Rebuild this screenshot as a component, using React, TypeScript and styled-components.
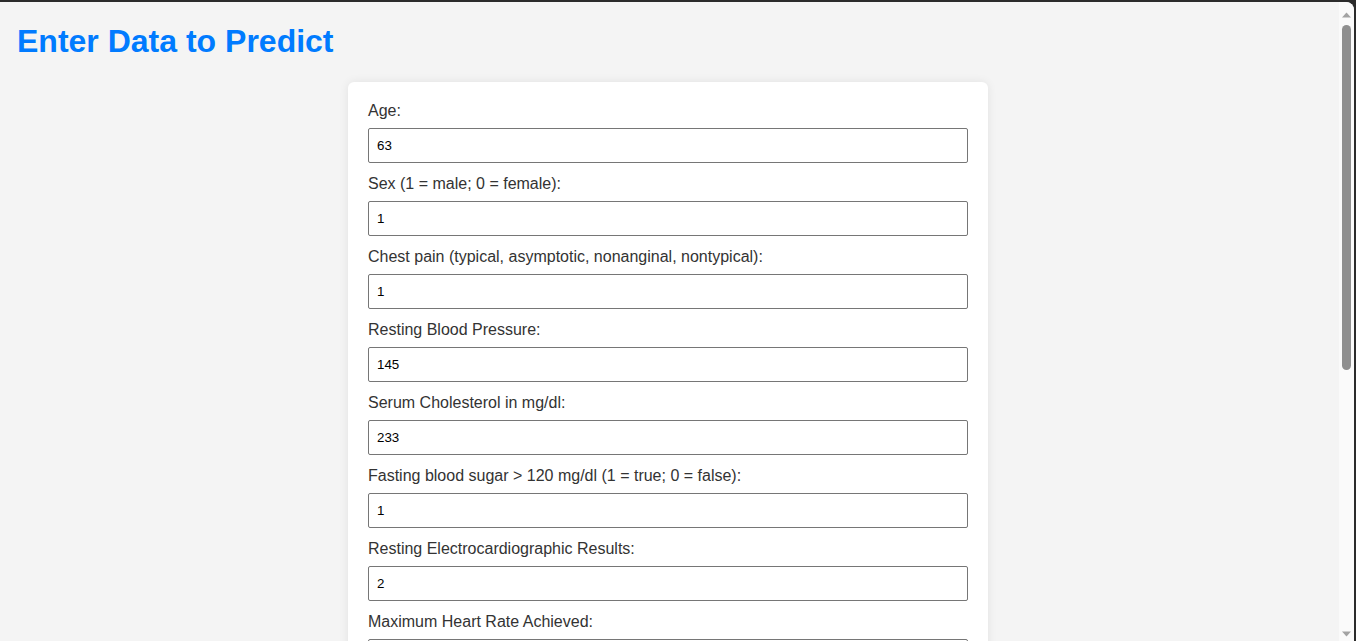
import React from "react";
import styled, { createGlobalStyle } from "styled-components";

const Global = createGlobalStyle`
  html, body { margin: 0; padding: 0; background: #2b2b2b; overflow: hidden; }
  #root { width: 1356px; height: 641px; }
`;

const Frame = styled.div`
  width: 1356px;
  height: 641px;
  box-sizing: border-box;
  padding: 2px 2px 0 0;
  background: #2b2b2b;
`;

const Viewport = styled.div`
  display: flex;
  height: 639px;
  background: #f4f4f4;
  border-top-right-radius: 8px;
  overflow: hidden;
`;

const Page = styled.div`
  flex: 1;
  min-width: 0;
  overflow: hidden;
  padding: 0 18px 0 15px;
  font-family: "Liberation Sans", Arial, sans-serif;
  display: flow-root;
`;

const Title = styled.h1`
  margin: 21px 0 22px 2px;
  font-size: 32px;
  line-height: 37px;
  font-weight: 700;
  color: #007bff;
`;

const Card = styled.form`
  width: 640px;
  box-sizing: border-box;
  margin: 0 auto;
  padding: 20px 20px 20px;
  background: #ffffff;
  border-radius: 6px;
  box-shadow: 0 0 10px rgba(0, 0, 0, 0.08);
`;

const Label = styled.label`
  display: block;
  font-size: 16px;
  line-height: 18px;
  color: #333333;
  margin-bottom: 8px;
`;

const Input = styled.input`
  display: block;
  width: 100%;
  height: 35px;
  box-sizing: border-box;
  margin: 0 0 12px;
  padding: 0 8px;
  border: 1px solid #767676;
  border-radius: 2px;
  font-family: "Liberation Sans", Arial, sans-serif;
  font-size: 13.33px;
  color: #000;
  background: #fff;
  outline: none;
`;

const Scrollbar = styled.div`
  width: 15px;
  flex: none;
  background: #fafafa;
  display: flex;
  flex-direction: column;
  align-items: center;
`;

const Arrow = styled.div<{ $down?: boolean }>`
  height: 20px;
  flex: none;
  display: flex;
  align-items: ${(p) => (p.$down ? "flex-end" : "flex-start")};
  padding: ${(p) => (p.$down ? "0 0 4px" : "10px 0 0")};
  box-sizing: border-box;
  justify-content: center;
  svg { display: block; }
`;

const Track = styled.div`
  flex: 1;
  width: 100%;
  display: flex;
  justify-content: center;
  padding-top: 3px;
`;

const Thumb = styled.div`
  width: 9px;
  height: 345px;
  border-radius: 5px;
  background: #8f8f8f;
`;

const fields: [string, string][] = [
  ["Age:", "63"],
  ["Sex (1 = male; 0 = female):", "1"],
  ["Chest pain (typical, asymptotic, nonanginal, nontypical):", "1"],
  ["Resting Blood Pressure:", "145"],
  ["Serum Cholesterol in mg/dl:", "233"],
  ["Fasting blood sugar > 120 mg/dl (1 = true; 0 = false):", "1"],
  ["Resting Electrocardiographic Results:", "2"],
  ["Maximum Heart Rate Achieved:", "150"],
];

export default function App() {
  return (
    <>
      <Global />
      <Frame>
        <Viewport>
          <Page>
            <Title>Enter Data to Predict</Title>
            <Card onSubmit={(e) => e.preventDefault()}>
              {fields.map(([label, value], i) => (
                <React.Fragment key={i}>
                  <Label htmlFor={`f${i}`}>{label}</Label>
                  <Input id={`f${i}`} type="text" defaultValue={value} />
                </React.Fragment>
              ))}
            </Card>
          </Page>
          <Scrollbar>
            <Arrow>
              <svg width="9" height="6" viewBox="0 0 9 6">
                <path d="M0 5.5 L4.5 0.5 L9 5.5 Z" fill="#a3a3a3" />
              </svg>
            </Arrow>
            <Track>
              <Thumb />
            </Track>
            <Arrow $down>
              <svg width="9" height="6" viewBox="0 0 9 6">
                <path d="M0 0.5 L4.5 5.5 L9 0.5 Z" fill="#a3a3a3" />
              </svg>
            </Arrow>
          </Scrollbar>
        </Viewport>
      </Frame>
    </>
  );
}
